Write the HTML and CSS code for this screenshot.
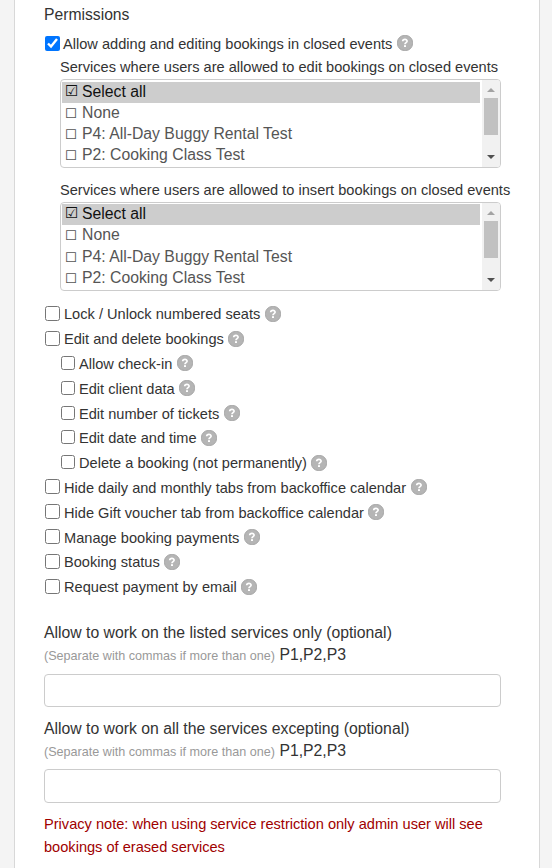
FILE: index.html
```
<!DOCTYPE html>
<html lang="en">
<head>
  <meta charset="UTF-8">
  <meta name="viewport" content="width=device-width, initial-scale=1.0">
  <title>Permissions</title>
  <link rel="stylesheet" href="styles.css">
</head>
<body>

  <!-- Help icon, reused by every permission -->
  <svg class="defs" width="0" height="0">
    <symbol id="help" viewBox="0 0 16 16">
      <rect x="0.5" y="0.5" width="15" height="15" rx="6.8" fill="#b5b5b5" stroke="#a6a6a6"/>
      <path d="M5.7 6.3C5.8 3.7 10.2 3.8 10.1 6.2C10 7.7 8 7.6 8 9.2" fill="none" stroke="#fff" stroke-width="1.7"/>
      <rect x="7" y="10.2" width="2" height="1.8" fill="#fff"/>
    </symbol>
  </svg>

  <form class="panel">
    <h2 class="title">Permissions</h2>

    <div class="perm first">
      <input type="checkbox" id="closed" checked>
      <label for="closed">Allow adding and editing bookings in closed events</label>
      <svg class="help"><use href="#help"/></svg>
    </div>

    <div class="services">
      <div class="services-label">Services where users are allowed to edit bookings on closed events</div>
      <div class="listbox">
        <ul class="options">
          <li class="selected"><span class="box">☑</span>Select all</li>
          <li><span class="box">◻</span>None</li>
          <li><span class="box">◻</span>P4: All-Day Buggy Rental Test</li>
          <li><span class="box">◻</span>P2: Cooking Class Test</li>
        </ul>
        <div class="scrollbar">
          <span class="arrow up"></span>
          <span class="thumb"></span>
          <span class="arrow down"></span>
        </div>
      </div>
    </div>

    <div class="services">
      <div class="services-label">Services where users are allowed to insert bookings on closed events</div>
      <div class="listbox">
        <ul class="options">
          <li class="selected"><span class="box">☑</span>Select all</li>
          <li><span class="box">◻</span>None</li>
          <li><span class="box">◻</span>P4: All-Day Buggy Rental Test</li>
          <li><span class="box">◻</span>P2: Cooking Class Test</li>
        </ul>
        <div class="scrollbar">
          <span class="arrow up"></span>
          <span class="thumb"></span>
          <span class="arrow down"></span>
        </div>
      </div>
    </div>

    <div class="perms">
      <div class="perm">
        <input type="checkbox" id="lock">
        <label for="lock">Lock / Unlock numbered seats</label>
        <svg class="help"><use href="#help"/></svg>
      </div>
      <div class="perm">
        <input type="checkbox" id="edit">
        <label for="edit">Edit and delete bookings</label>
        <svg class="help"><use href="#help"/></svg>
      </div>
      <div class="perm sub">
        <input type="checkbox" id="checkin">
        <label for="checkin">Allow check-in</label>
        <svg class="help"><use href="#help"/></svg>
      </div>
      <div class="perm sub">
        <input type="checkbox" id="client">
        <label for="client">Edit client data</label>
        <svg class="help"><use href="#help"/></svg>
      </div>
      <div class="perm sub">
        <input type="checkbox" id="tickets">
        <label for="tickets">Edit number of tickets</label>
        <svg class="help"><use href="#help"/></svg>
      </div>
      <div class="perm sub">
        <input type="checkbox" id="date">
        <label for="date">Edit date and time</label>
        <svg class="help"><use href="#help"/></svg>
      </div>
      <div class="perm sub">
        <input type="checkbox" id="delete">
        <label for="delete">Delete a booking (not permanently)</label>
        <svg class="help"><use href="#help"/></svg>
      </div>
      <div class="perm">
        <input type="checkbox" id="tabs">
        <label for="tabs">Hide daily and monthly tabs from backoffice calendar</label>
        <svg class="help"><use href="#help"/></svg>
      </div>
      <div class="perm">
        <input type="checkbox" id="gift">
        <label for="gift">Hide Gift voucher tab from backoffice calendar</label>
        <svg class="help"><use href="#help"/></svg>
      </div>
      <div class="perm">
        <input type="checkbox" id="payments">
        <label for="payments">Manage booking payments</label>
        <svg class="help"><use href="#help"/></svg>
      </div>
      <div class="perm">
        <input type="checkbox" id="status">
        <label for="status">Booking status</label>
        <svg class="help"><use href="#help"/></svg>
      </div>
      <div class="perm">
        <input type="checkbox" id="request">
        <label for="request">Request payment by email</label>
        <svg class="help"><use href="#help"/></svg>
      </div>
    </div>

    <div class="field">
      <label for="only">Allow to work on the listed services only (optional)<br>
        <small>(Separate with commas if more than one)</small> P1,P2,P3</label>
      <input type="text" id="only">
    </div>
    <div class="field">
      <label for="except">Allow to work on all the services excepting (optional)<br>
        <small>(Separate with commas if more than one)</small> P1,P2,P3</label>
      <input type="text" id="except">
    </div>

    <p class="note">Privacy note: when using service restriction only admin user will see bookings of erased services</p>
  </form>

</body>
</html>
```
FILE: styles.css
```
* {
  box-sizing: border-box;
}

body {
  margin: 0;
  background: #f4f4f4;
  font-family: "Liberation Sans", Arial, sans-serif;
  font-size: 15.77px;
  color: #333;
  height: 868px;
  overflow: hidden;
}

.defs {
  display: block;
}

.panel {
  width: 526px;
  height: 868px;
  margin-left: 14px;
  padding: 0 38px 0 29px;
  background: #fff;
  border: solid #d8d8d8;
  border-width: 0 1px;
}

.title {
  margin: 0;
  padding-bottom: 2px;
  font-size: 15.7px;
  font-weight: normal;
  line-height: 29px;
}

/* Permission rows */
.perm {
  display: flex;
  align-items: center;
  height: 24.8px;
  font-size: 14.6px;
  white-space: nowrap;
}

.perm input {
  width: 15px;
  height: 15px;
  margin: 0 4px 2px 1px;
}

.perm.first {
  height: 25px;
}

.perm.first input {
  margin: 0 3px 0 1px;
}

.perm.sub {
  padding-left: 16px;
}

.perm.sub input {
  width: 14px;
  height: 14px;
  margin-right: 4px;
}

.help {
  width: 16px;
  height: 16px;
  margin: 0 0 1px 4.5px;
}

.perms {
  padding-top: 11px;
}

/* Service lists */
.services {
  padding-left: 16px;
}

.services + .services {
  padding-top: 11px;
}

.services-label {
  height: 23px;
  line-height: 23px;
  font-size: 14.6px;
  white-space: nowrap;
}

.listbox {
  display: flex;
  width: 441px;
  height: 89px;
  border: 1px solid #ccc;
  border-radius: 4px;
  overflow: hidden;
}

.options {
  flex: 1;
  margin: 0;
  padding: 2px 2px 0 1px;
  list-style: none;
  color: #555;
}

.services + .services .options {
  padding-top: 1px;
}

.options li {
  display: flex;
  height: 21px;
  line-height: 19px;
  padding-left: 3px;
}

.services + .services li {
  height: 21.3px;
}

.options .selected {
  background: #cdcdcd;
  color: #111;
}

.box {
  width: 17px;
  font-family: "DejaVu Sans", sans-serif;
  font-size: 15px;
  line-height: 19px;
}

.scrollbar {
  display: flex;
  flex-direction: column;
  align-items: center;
  width: 18px;
  padding: 8px 0;
  background: #f1f1f1;
}

.arrow {
  border: 4px solid transparent;
}

.arrow.up {
  border-top: none;
  border-bottom-color: #a3a3a3;
}

.arrow.down {
  margin-top: auto;
  border-bottom: none;
  border-top-color: #505050;
}

.thumb {
  width: 14px;
  height: 37px;
  margin-top: 6px;
  background: #c1c1c1;
}

/* Text fields */
.field {
  padding-top: 11px;
}

.perms + .field {
  padding-top: 22px;
}

.field label {
  display: block;
  line-height: 22px;
}

.field small {
  font-size: 12.6px;
  color: #999;
}

.field input {
  display: block;
  width: 457px;
  height: 33px;
  margin-top: 7px;
  border: 1px solid #ccc;
  border-radius: 4px;
  background: #fff;
}

.field + .field input {
  height: 34px;
  margin-top: 6px;
}

.note {
  margin: 10px 0 0;
  font-size: 14.6px;
  line-height: 23px;
  color: #a00000;
}
```
